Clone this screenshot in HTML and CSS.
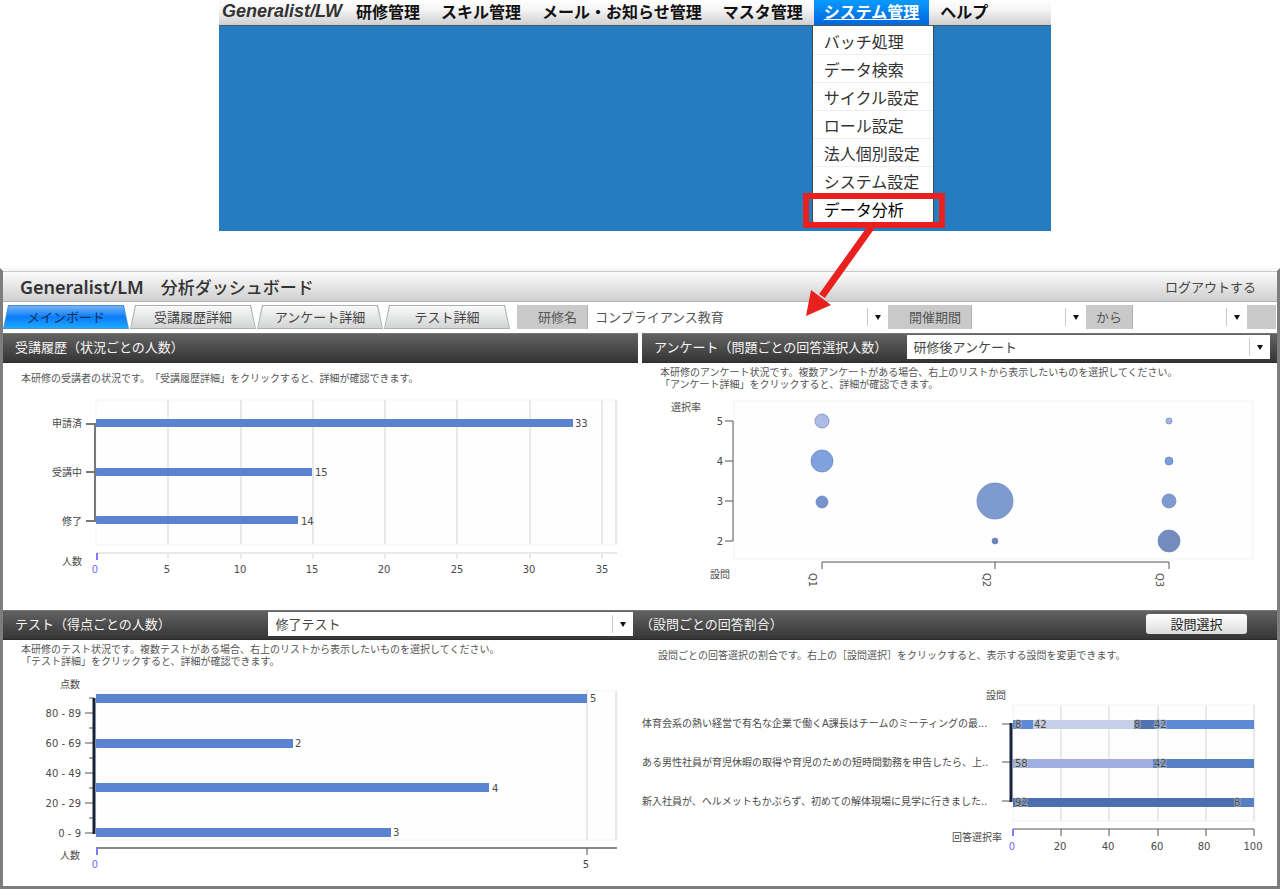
FILE: index.html
```html
<!DOCTYPE html>
<html lang="ja">
<head>
    <meta charset="UTF-8">
    <meta name="viewport" content="width=device-width, initial-scale=1.0">
    <title>Generalist/LM 分析ダッシュボード</title>
    <link rel="stylesheet" href="styles.css">
</head>
<body>
    <div class="portal">
        <nav class="nav">
            <a class="logo" href="#">Generalist/LW</a>
            <ul class="menu">
                <li><a href="#">研修管理</a></li>
                <li><a href="#">スキル管理</a></li>
                <li><a href="#">メール・お知らせ管理</a></li>
                <li><a href="#">マスタ管理</a></li>
                <li class="active">
                    <a href="#">システム管理</a>
                    <ul class="submenu">
                        <li><a href="#">バッチ処理</a></li>
                        <li><a href="#">データ検索</a></li>
                        <li><a href="#">サイクル設定</a></li>
                        <li><a href="#">ロール設定</a></li>
                        <li><a href="#">法人個別設定</a></li>
                        <li><a href="#">システム設定</a></li>
                        <li class="marked">
                            <a href="#">データ分析</a>
                            <svg class="arrow" width="70" height="92" viewBox="0 0 70 92">
                                <path d="M66 0 L16 70" stroke="#e8211f" stroke-width="7"/>
                                <path d="M5 64 L25 79 L0 90 Z" fill="#e8211f"/>
                            </svg>
                        </li>
                    </ul>
                </li>
                <li><a href="#">ヘルプ</a></li>
            </ul>
        </nav>
    </div>

    <div class="dashboard">
        <header class="header">
            <h1><span>Generalist/LM</span>　分析ダッシュボード</h1>
            <a href="#">ログアウトする</a>
        </header>

        <div class="tools">
            <div class="tabs">
                <button type="button" class="active"><span>メインボード</span></button>
                <button type="button"><span>受講履歴詳細</span></button>
                <button type="button"><span>アンケート詳細</span></button>
                <button type="button"><span>テスト詳細</span></button>
            </div>
            <form class="filter">
                <label for="course">研修名</label>
                <div class="select wide"><select id="course"><option>コンプライアンス教育</option></select></div>
                <label for="from">開催期間</label>
                <div class="select"><select id="from"><option></option></select></div>
                <label class="short" for="to">から</label>
                <div class="select"><select id="to"><option></option></select></div>
            </form>
        </div>

        <div class="row">
            <section class="panel">
                <div class="head"><h2>受講履歴（状況ごとの人数）</h2></div>
                <p>本研修の受講者の状況です。「受講履歴詳細」をクリックすると、詳細が確認できます。</p>
                <svg class="chart" viewBox="0 0 635 219">
                    <rect class="plot" x="93" y="9" width="521" height="145"/>
                    <path class="grid" d="M165 9V153 M238 9V153 M310 9V153 M382 9V153 M454 9V153 M527 9V153 M599 9V153 M613 9V153"/>
                    <rect class="bar" x="93" y="28" width="477" height="8"/>
                    <rect class="bar" x="93" y="77" width="216" height="8"/>
                    <rect class="bar" x="93" y="125" width="202" height="8"/>
                    <path class="axis bold" d="M83 33H92V130H83 M83 81H92"/>
                    <path class="grid" d="M93 162H614 M165 162V168 M238 162V168 M310 162V168 M382 162V168 M454 162V168 M527 162V168 M599 162V168"/>
                    <path class="origin" d="M94 162V169"/>
                    <g class="end">
                        <text x="79" y="36">申請済</text>
                        <text x="79" y="85">受講中</text>
                        <text x="79" y="134">修了</text>
                        <text x="79" y="174">人数</text>
                    </g>
                    <text x="572" y="36">33</text>
                    <text x="312" y="85">15</text>
                    <text x="298" y="134">14</text>
                    <g class="mid">
                        <text class="zero" x="92" y="182">0</text>
                        <text x="164" y="182">5</text>
                        <text x="237" y="182">10</text>
                        <text x="309" y="182">15</text>
                        <text x="381" y="182">20</text>
                        <text x="454" y="182">25</text>
                        <text x="526" y="182">30</text>
                        <text x="599" y="182">35</text>
                    </g>
                </svg>
            </section>

            <section class="panel">
                <div class="head">
                    <h2><label for="survey">アンケート（問題ごとの回答選択人数）</label></h2>
                    <div class="select"><select id="survey"><option>研修後アンケート</option></select></div>
                </div>
                <p>本研修のアンケート状況です。複数アンケートがある場合、右上のリストから表示したいものを選択してください。<br>「アンケート詳細」をクリックすると、詳細が確認できます。</p>
                <svg class="chart" viewBox="0 0 635 219">
                    <rect class="plot" x="92" y="10" width="519" height="158"/>
                    <path class="axis" d="M83 30H91V150H83 M83 70H91 M83 110H91"/>
                    <path class="axis" d="M180 178V171H527V178 M353 171V178"/>
                    <g class="bubbles">
                        <circle cx="180" cy="30" r="7" fill="#aebce4"/>
                        <circle cx="180" cy="70" r="11" fill="#7fa1de"/>
                        <circle cx="180" cy="111" r="6" fill="#7695cf"/>
                        <circle cx="353" cy="110" r="18" fill="#7e9bd0"/>
                        <circle cx="353" cy="150" r="3" fill="#6983bb"/>
                        <circle cx="527" cy="30" r="3" fill="#a9b8e2"/>
                        <circle cx="527" cy="70" r="4" fill="#7a9ee0"/>
                        <circle cx="527" cy="110" r="7" fill="#7e9bd0"/>
                        <circle cx="527" cy="150" r="11" fill="#748cbd"/>
                    </g>
                    <text x="29" y="20">選択率</text>
                    <g class="end">
                        <text x="81" y="34">5</text>
                        <text x="81" y="74">4</text>
                        <text x="81" y="114">3</text>
                        <text x="81" y="154">2</text>
                        <text x="88" y="187">設問</text>
                    </g>
                    <text transform="translate(167 182) rotate(90)">Q1</text>
                    <text transform="translate(341 182) rotate(90)">Q2</text>
                    <text transform="translate(514 182) rotate(90)">Q3</text>
                </svg>
            </section>
        </div>

        <div class="row joined">
            <section class="panel">
                <div class="head">
                    <h2><label for="test">テスト（得点ごとの人数）</label></h2>
                    <div class="select"><select id="test"><option>修了テスト</option></select></div>
                </div>
                <p>本研修のテスト状況です。複数テストがある場合、右上のリストから表示したいものを選択してください。<br>「テスト詳細」をクリックすると、詳細が確認できます。</p>
                <svg class="chart" viewBox="0 0 637 218">
                    <rect class="plot" x="93" y="23" width="521" height="149"/>
                    <path class="grid" d="M584 23V172 M613 23V172"/>
                    <rect class="bar" x="93" y="26" width="491" height="9"/>
                    <rect class="bar" x="93" y="71" width="197" height="9"/>
                    <rect class="bar" x="93" y="115" width="393" height="9"/>
                    <rect class="bar" x="93" y="160" width="295" height="9"/>
                    <path class="axis" d="M86 30H91 M82 45H91 M86 60H91 M82 75H91 M86 90H91 M82 105H91 M86 120H91 M82 135H91 M86 150H91 M82 165H91"/>
                    <path class="spine" d="M91 30V166"/>
                    <path class="axis soft" d="M93 180H614"/>
                    <path class="axis" d="M584 180V187"/>
                    <path class="origin" d="M94 180V187"/>
                    <g class="end">
                        <text x="77" y="20">点数</text>
                        <text x="78" y="49">80 - 89</text>
                        <text x="78" y="79">60 - 69</text>
                        <text x="78" y="109">40 - 49</text>
                        <text x="78" y="139">20 - 29</text>
                        <text x="78" y="169">0 - 9</text>
                        <text x="77" y="191">人数</text>
                    </g>
                    <text x="587" y="34">5</text>
                    <text x="292" y="79">2</text>
                    <text x="489" y="124">4</text>
                    <text x="390" y="168">3</text>
                    <g class="mid">
                        <text class="zero" x="92" y="200">0</text>
                        <text x="583" y="200">5</text>
                    </g>
                </svg>
            </section>

            <section class="panel">
                <div class="head flush">
                    <h2>（設問ごとの回答割合）</h2>
                    <button type="button" class="pick">設問選択</button>
                </div>
                <p>設問ごとの回答選択の割合です。右上の［設問選択］をクリックすると、表示する設問を変更できます。</p>
                <svg class="chart" viewBox="0 0 637 218">
                    <rect class="plot" x="373" y="37" width="241" height="116"/>
                    <path class="grid" d="M421 37V153 M469 37V153 M518 37V153 M566 37V153 M614 37V153"/>
                    <rect x="373" y="52" width="20" height="9" fill="#5f88d6"/>
                    <rect x="393" y="52" width="101" height="9" fill="#c5cfea"/>
                    <rect x="494" y="52" width="20" height="9" fill="#5273b0"/>
                    <rect x="514" y="52" width="100" height="9" fill="#5f88d6"/>
                    <rect x="373" y="91" width="140" height="9" fill="#9fafdf"/>
                    <rect x="513" y="91" width="101" height="9" fill="#567fc4"/>
                    <rect x="373" y="130" width="222" height="9" fill="#4c70af"/>
                    <rect x="595" y="130" width="19" height="9" fill="#567fc4"/>
                    <path class="axis" d="M362 56H370 M362 94H370 M362 133H370"/>
                    <path class="spine" d="M371 55V134"/>
                    <path class="axis" d="M373 161H614V168 M421 161V168 M469 161V168 M518 161V168 M566 161V168"/>
                    <path class="origin" d="M373 161V168"/>
                    <text x="2" y="59">体育会系の熱い経営で有名な企業で働くA課長はチームのミーティングの最...</text>
                    <text x="2" y="98">ある男性社員が育児休暇の取得や育児のための短時間勤務を申告したら、上..</text>
                    <text x="2" y="137">新入社員が、ヘルメットもかぶらず、初めての解体現場に見学に行きました..</text>
                    <g class="end">
                        <text x="366" y="31">設問</text>
                        <text x="362" y="173">回答選択率</text>
                    </g>
                    <g class="value">
                        <text x="375" y="60">8</text>
                        <text x="394" y="60">42</text>
                        <text x="494" y="60">8</text>
                        <text x="514" y="60">42</text>
                        <text x="375" y="99">58</text>
                        <text x="514" y="99">42</text>
                        <text x="375" y="138">92</text>
                        <text x="594" y="138">8</text>
                    </g>
                    <g class="mid">
                        <text class="zero" x="372" y="182">0</text>
                        <text x="420" y="182">20</text>
                        <text x="468" y="182">40</text>
                        <text x="517" y="182">60</text>
                        <text x="564" y="182">80</text>
                        <text x="613" y="182">100</text>
                    </g>
                </svg>
            </section>
        </div>
    </div>
</body>
</html>
```

FILE: styles.css
```css
*,*::before,*::after {
    margin: 0;
    padding: 0;
    box-sizing: border-box;
}
ul,li{
    list-style: none;
}
a{
    color: inherit;
    text-decoration: none;
}
body{
    background-color: #fff;
    color: #444;
    font-family: "Noto Sans CJK JP", sans-serif;
    font-size: 13px;
    text-spacing-trim: space-all;
}
button,select{
    font: inherit;
    color: inherit;
    border: none;
}

/* portal menu */
.portal{
    min-height: 231px;
    margin: 0 229px 37px 219px;
    background-color: #257cc0;
}
.nav{
    display: flex;
    height: 26px;
    padding-left: 3px;
    line-height: 22px;
    border-bottom: 1px solid #4d5a62;
    background: linear-gradient(#fff, #f4f4f4 40%, #cfcfcf);
}
.logo{
    width: 124px;
    font-family: "Liberation Sans", sans-serif;
    font-size: 18px;
    font-weight: bold;
    font-style: italic;
    color: #333;
}
.menu{
    display: flex;
    gap: 1px;
    font-size: 16px;
    color: #111;
}
.menu > li{
    position: relative;
    height: 25px;
    padding: 0 10px;
    font-weight: bold;
    white-space: nowrap;
}
.menu > li.active{
    background: linear-gradient(#0a9bff, #0065dc);
}
.menu > li.active > a{
    color: #fff;
    text-decoration: underline;
}
.submenu{
    position: absolute;
    z-index: 10;
    left: -2px;
    top: 26px;
    width: 122px;
    padding-top: 1px;
    border: 1px solid #444;
    border-top: none;
    border-radius: 0 0 4px 4px;
    background-color: #fff;
    font-weight: normal;
    line-height: 28px;
    color: #333;
}
.submenu > li{
    height: 28px;
    padding-left: 11px;
    border-bottom: 1px solid #eee;
}
.submenu > li.marked{
    position: relative;
    border-bottom: none;
    color: #000;
}
.marked::after{
    content: "";
    position: absolute;
    left: -10px;
    top: -2px;
    width: 142px;
    height: 35px;
    border: 6px solid #e8211f;
}
.arrow{
    position: absolute;
    left: -7px;
    top: 31px;
}

/* dashboard */
.dashboard{
    border: 3px solid #7d7d7d;
    border-top: 3px solid #f6f6f6;
}
.header{
    display: flex;
    justify-content: space-between;
    align-items: center;
    height: 31px;
    margin-bottom: 3px;
    padding: 0 21px 0 17px;
    border-top: 1px solid #c8c8c8;
    border-bottom: 1px solid #b4b4b4;
    background: linear-gradient(#fbfbfb, #cfcfcf);
}
.header h1{
    font-size: 17px;
    font-weight: 500;
    line-height: 28px;
    color: #333;
}
.header h1 span{
    font-family: "Noto Sans", sans-serif;
    font-size: 18px;
    font-weight: 600;
}
.tools{
    display: flex;
    gap: 7px;
    height: 24px;
    margin-bottom: 4px;
    padding-right: 1px;
    line-height: 24px;
}
.tabs{
    display: flex;
    gap: 1px;
}
.tabs button{
    position: relative;
    width: 126px;
    background-color: #a9b0b0;
    clip-path: polygon(5px 0, 121px 0, 100% 100%, 0 100%);
}
.tabs button::before{
    content: "";
    position: absolute;
    inset: 1px;
    background: linear-gradient(#fafafa, #d2d4d4);
    clip-path: polygon(5px 0, 119px 0, 100% 100%, 0 100%);
}
.tabs span{
    position: relative;
}
.tabs button.active{
    background-color: #4a90d0;
}
.tabs button.active::before{
    background: linear-gradient(#74b4fa, #0a7dfa 50%, #1fa8ff);
}
.tabs button.active span{
    color: #12305a;
}
.filter{
    flex: 1;
    display: flex;
    padding-right: 29px;
    background-color: #c9c9c9;
    color: #555;
}
.filter label{
    padding: 0 10px 0 21px;
    border-right: 1px solid #a9b3b3;
}
.filter label.short{
    padding: 0 10px;
}
.filter .select{
    width: 114px;
}
.filter .wide{
    flex: 1;
}
.select{
    position: relative;
    height: 24px;
    background-color: #fff;
}
.select select{
    display: block;
    width: 100%;
    height: 24px;
    padding: 0 24px 0 7px;
    appearance: none;
    background-color: transparent;
    line-height: 24px;
}
.select::before{
    content: "";
    position: absolute;
    right: 20px;
    top: 3px;
    height: 18px;
    border-left: 1px solid #c5cccc;
}
.select::after{
    content: "";
    position: absolute;
    right: 7px;
    top: 10px;
    border: 3px solid transparent;
    border-top: 5px solid #111;
    border-bottom: none;
}

.row{
    display: flex;
    gap: 4px;
}
.joined{
    gap: 0;
}
.panel{
    flex: 1;
    min-width: 0;
}
.head{
    display: flex;
    justify-content: space-between;
    align-items: center;
    height: 30px;
    padding: 0 7px 2px 12px;
    border-top: 1px solid #777;
    border-bottom: 1px solid #2b2b2b;
    background: linear-gradient(#626262, #353535);
}
.head h2{
    font-size: 13px;
    font-weight: normal;
    line-height: 24px;
    color: #f4f4f4;
    white-space: nowrap;
}
.head .select{
    width: 59%;
}
.head.flush{
    padding-left: 0;
    padding-right: 30px;
}
.pick{
    width: 101px;
    height: 20px;
    border-radius: 3px;
    background: linear-gradient(#fff, #dcdcdc);
    line-height: 20px;
    color: #222;
}
.panel p{
    display: grid;
    align-content: center;
    min-height: 24px;
    margin: 4px 0 0 18px;
    font-family: "Liberation Sans", "Noto Sans CJK JP", sans-serif;
    font-size: 10px;
    line-height: 12px;
    color: #555;
}

/* charts */
.chart{
    display: block;
    width: 100%;
    height: auto;
    font-family: "DejaVu Sans", "Noto Sans CJK JP", sans-serif;
    font-size: 10px;
}
.chart text{
    fill: #4a4a4a;
}
.chart .plot{
    fill: #fefefe;
    stroke: #f3f3f3;
}
.chart .grid{
    fill: none;
    stroke: #e9e9e9;
    stroke-width: 2;
}
.chart .bar{
    fill: #5b84d0;
}
.chart .axis{
    fill: none;
    stroke: #555;
}
.chart .axis.bold{
    stroke: #777;
    stroke-width: 2;
}
.chart .axis.soft{
    stroke: #888;
    stroke-width: 2;
}
.chart .spine{
    stroke: #17233a;
    stroke-width: 3;
}
.chart .origin{
    stroke: #7d7aff;
    stroke-width: 2;
}
.chart .end{
    text-anchor: end;
}
.chart .mid{
    text-anchor: middle;
}
.chart .zero{
    fill: #6f6cff;
}
.chart .value text{
    stroke: #c8c8c8;
    stroke-opacity: .6;
    stroke-width: 2;
    paint-order: stroke;
}
.bubbles circle{
    stroke: #6482be;
    stroke-opacity: .7;
}
```
